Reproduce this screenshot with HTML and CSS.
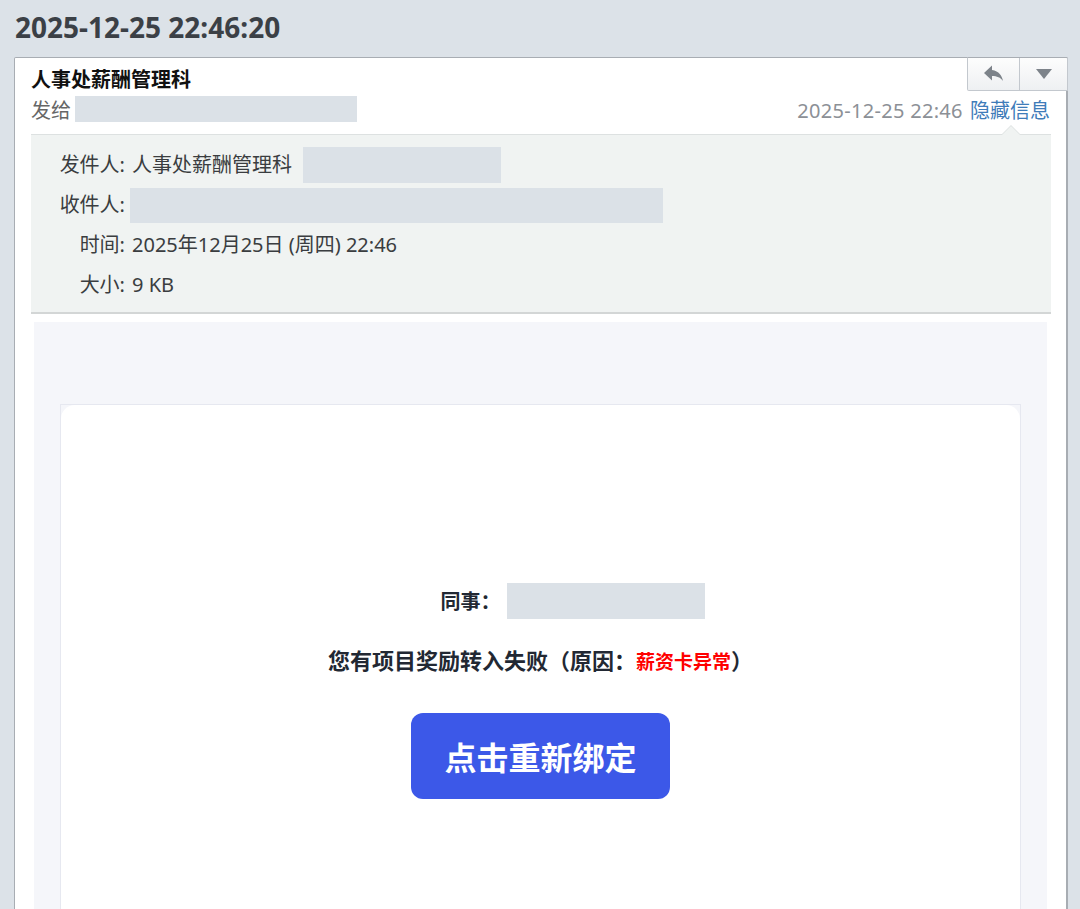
FILE: index.html
```html
<!DOCTYPE html>
<html>
<head>
  <meta charset="utf-8">
  <title>邮件 - 人事处薪酬管理科</title>
  <link rel="stylesheet" href="styles.css">
</head>
<body>
  <h1 class="page-title">2025-12-25 22:46:20</h1>

  <div class="mail">
    <div class="mail-actions">
      <button class="act-btn reply-btn" title="回复">
        <svg width="26" height="20" viewBox="0 0 24 20"><path d="M10 6V1.5L2 9l8 7.5V12c5 0 8.5 1.4 11 5-1-5.2-4-10-11-11z" fill="#7d838a"/></svg>
      </button>
      <button class="act-btn more-btn" title="更多">
        <svg width="16" height="10" viewBox="0 0 16 10"><path d="M0 0h16L8 10z" fill="#7d838a"/></svg>
      </button>
    </div>

    <div class="mail-head">
      <div class="subject">人事处薪酬管理科</div>
      <div class="meta-row">
        <div class="to">发给 <span class="mask mask-to"></span></div>
        <div class="meta-right">
          <span class="date">2025-12-25 22:46</span>
          <a class="toggle" href="#">隐藏信息</a>
        </div>
      </div>
    </div>

    <div class="details">
      <div class="d-label">发件人:</div>
      <div class="d-value">人事处薪酬管理科<span class="mask mask-from"></span></div>
      <div class="d-label">收件人:</div>
      <div class="d-value"><span class="mask mask-rcpt"></span></div>
      <div class="d-label">时间:</div>
      <div class="d-value">2025年12月25日 (周四) 22:46</div>
      <div class="d-label">大小:</div>
      <div class="d-value">9 KB</div>
    </div>

    <div class="mail-body">
      <div class="card-frame">
        <div class="card">
          <p class="greet">同事：<span class="mask mask-name"></span></p>
          <p class="notice">您有项目奖励转入失败（原因：<span class="reason">薪资卡异常</span>）</p>
          <a class="bind-btn" href="#">点击重新绑定</a>
        </div>
      </div>
    </div>
  </div>
</body>
</html>
```

FILE: styles.css
```css
body {
  margin: 0;
  background-color: #dce2e8;
  font-family: "Noto Sans", "Noto Sans CJK SC", sans-serif;
  color: #333;
  overflow: hidden;
}

.page-title {
  margin: 0;
  height: 57px;
  padding-left: 15px;
  font-size: 28px;
  line-height: 54px;
  font-weight: bold;
  color: #3b4046;
}

.mail {
  position: relative;
  margin: 0 12px 0 14px;
  background-color: #fff;
  border: 1px solid #a8adb3;
  border-right-width: 2px;
  border-bottom: none;
  border-radius: 2px 2px 0 0;
  min-height: 900px;
}

.mail-actions {
  position: absolute;
  top: -1px;
  right: -2px;
  display: flex;
  border: 1px solid #c3c8ce;
  border-top-color: #a8adb3;
  border-radius: 0 2px 0 2px;
  background: linear-gradient(#fdfdfd, #eef0f2);
}

.act-btn {
  height: 32px;
  border: none;
  background: none;
  padding: 0;
  display: flex;
  align-items: center;
  justify-content: center;
  cursor: pointer;
}

.reply-btn {
  width: 52px;
  border-right: 1px solid #c3c8ce;
}

.more-btn {
  width: 47px;
}

.mail-head {
  padding: 8px 16px 0 16px;
}

.subject {
  font-size: 20px;
  line-height: 28px;
  font-weight: bold;
  color: #111;
}

.meta-row {
  display: flex;
  justify-content: space-between;
  align-items: center;
  height: 30px;
  font-size: 20px;
  color: #666;
}

.to {
  display: flex;
  align-items: center;
}

.mask {
  display: inline-block;
  background-color: #dbe1e7;
  vertical-align: middle;
}

.mask-to {
  width: 282px;
  height: 26px;
  margin-left: 4px;
}

.meta-right {
  white-space: nowrap;
}

.date {
  color: #8c9096;
  margin-right: 2px;
  letter-spacing: 0.3px;
}

.toggle {
  color: #3f7cb9;
  text-decoration: none;
}

.details {
  position: relative;
  margin: 10px 15px 0 16px;
  padding: 10px 0 7px 0;
  background-color: #f0f3f2;
  border-top: 1px solid #dde1e1;
  border-bottom: 2px solid #d3d6d6;
  display: grid;
  grid-template-columns: 94px 1fr;
  column-gap: 7px;
  font-size: 20px;
  line-height: 40px;
  color: #3a3d40;
}

/* little notch under "隐藏信息" */
.details::before,
.details::after {
  content: "";
  position: absolute;
  right: 31px;
  border: 9px solid transparent;
  border-top: none;
}

.details::before {
  top: -10px;
  border-bottom-color: #dde1e1;
}

.details::after {
  top: -9px;
  border-bottom-color: #f0f3f2;
}

.d-label {
  text-align: right;
}

.d-value {
  display: flex;
  align-items: center;
}

.mask-from {
  width: 198px;
  height: 36px;
  margin-left: 11px;
}

.mask-rcpt {
  width: 533px;
  height: 35px;
  margin-left: -2px;
}

.mail-body {
  margin: 8px 19px 0 19px;
  padding: 82px 26px 0 26px;
  background-color: #f5f6fa;
  min-height: 800px;
}

.card-frame {
  border: 1px solid #e6e8f0;
  border-bottom: none;
}

.card {
  background-color: #fff;
  border-radius: 14px 14px 0 0;
  min-height: 700px;
  padding-top: 178px;
  text-align: center;
  font-family: "Noto Sans CJK SC", sans-serif;
  color: #222833;
}

.greet {
  margin: 0;
  font-size: 20px;
  line-height: 36px;
  font-weight: bold;
  padding-left: 64px;
}

.mask-name {
  width: 198px;
  height: 36px;
  vertical-align: top;
  margin-left: 6px;
}

.notice {
  margin: 25px 0 0 0;
  font-size: 22px;
  line-height: 30px;
  font-weight: bold;
}

.reason {
  color: #ff0000;
  font-size: 19px;
}

.bind-btn {
  display: inline-block;
  margin-top: 37px;
  width: 259px;
  height: 86px;
  line-height: 86px;
  background-color: #3c58e8;
  color: #fff;
  font-size: 32px;
  font-weight: bold;
  text-decoration: none;
  border-radius: 12px;
}
```
